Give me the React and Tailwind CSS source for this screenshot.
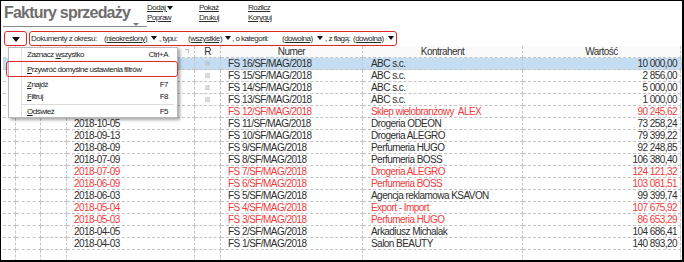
import React from "react";

const Tri = ({ w = 7, h = 4, color = "#111" }) => (
  <svg width={w} height={h} viewBox={`0 0 ${w} ${h}`} className="inline-block">
    <path d={`M0 0H${w}L${w / 2} ${h}Z`} fill={color} />
  </svg>
);

const rows = [
  { d: "", n: "FS 16/SF/MAG/2018", k: "ABC s.c.", v: "10 000,00", sel: true, icon: true },
  { d: "", n: "FS 15/SF/MAG/2018", k: "ABC s.c.", v: "2 856,00", icon: true },
  { d: "", n: "FS 14/SF/MAG/2018", k: "ABC s.c.", v: "5 000,00", icon: true },
  { d: "", n: "FS 13/SF/MAG/2018", k: "ABC s.c.", v: "1 000,00", icon: true },
  { d: "", n: "FS 12/SF/MAG/2018", k: "Sklep wielobranżowy  ALEX", v: "90 245,62", red: true },
  { d: "2018-10-05", n: "FS 11/SF/MAG/2018", k: "Drogeria ODEON", v: "73 258,24" },
  { d: "2018-09-13", n: "FS 10/SF/MAG/2018", k: "Drogeria ALEGRO", v: "79 399,22" },
  { d: "2018-08-09", n: "FS 9/SF/MAG/2018", k: "Perfumeria HUGO", v: "92 248,85" },
  { d: "2018-07-09", n: "FS 8/SF/MAG/2018", k: "Perfumeria BOSS", v: "106 380,40" },
  { d: "2018-07-09", n: "FS 7/SF/MAG/2018", k: "Drogeria ALEGRO", v: "124 121,32", red: true },
  { d: "2018-06-09", n: "FS 6/SF/MAG/2018", k: "Perfumeria BOSS", v: "103 081,51", red: true },
  { d: "2018-06-03", n: "FS 5/SF/MAG/2018", k: "Agencja reklamowa KSAVON", v: "99 399,74" },
  { d: "2018-05-04", n: "FS 4/SF/MAG/2018", k: "Export - Import", v: "107 675,92", red: true },
  { d: "2018-05-03", n: "FS 3/SF/MAG/2018", k: "Perfumeria HUGO", v: "86 653,29", red: true },
  { d: "2018-04-05", n: "FS 2/SF/MAG/2018", k: "Arkadiusz Michalak", v: "104 686,41" },
  { d: "2018-04-03", n: "FS 1/SF/MAG/2018", k: "Salon BEAUTY", v: "140 893,20" },
  { d: "", n: "", k: "", v: "" },
];

const cell = "border-r border-b border-dashed border-[#c4c4c4] h-[12px] leading-[11px] overflow-hidden whitespace-nowrap";
const grid = "grid grid-cols-[13px_25px_26px_128px_26px_142px_160px_158px]";

function RIcon() {
  return (
    <svg width="5" height="5" viewBox="0 0 5 5" className="block">
      <rect x="0" y="0.5" width="5" height="1" fill="#b8b8b8" />
      <rect x="0" y="2.5" width="5" height="1" fill="#b8b8b8" />
      <rect x="0" y="4" width="5" height="1" fill="#d0d0d0" />
    </svg>
  );
}

function MenuItem({ children, sc, h }) {
  return (
    <div className={`flex items-center justify-between pl-[18px] pr-[9px] ${h}`}>
      <span>{children}</span>
      <span>{sc}</span>
    </div>
  );
}

export default function App() {
  return (
    <div
      className="relative w-[684px] h-[262px] overflow-hidden bg-white border-l border-t border-black border-r-2 border-b-2 text-[#2b2b2b]"
      style={{ fontFamily: '"Liberation Sans", Arial, sans-serif' }}
    >
      {/* top bar */}
      <div className="flex h-[30px]">
        <div className="ml-[2px] w-[144px] h-[26px] border-b border-[#8a8a8a] flex items-start pt-[2px] pl-[1px]">
          <span className="text-[16px] leading-[20px] font-bold tracking-[-0.8px] text-[#6e6e6e]">Faktury sprzedaży</span>
          <span className="ml-[3px] mt-[9px]"><Tri w={6} h={3} color="#777" /></span>
        </div>
        <div className="w-[52px] pt-[2px] text-[8px] tracking-[-0.5px] leading-[10px]">
          <div className="underline">Dodaj <Tri w={6} h={4} /></div>
          <div className="underline">Popraw</div>
        </div>
        <div className="w-[49px] pt-[2px] text-[8px] tracking-[-0.5px] leading-[10px]">
          <div className="underline">Pokaż</div>
          <div className="underline">Drukuj</div>
        </div>
        <div className="pt-[2px] text-[8px] tracking-[-0.5px] leading-[10px]">
          <div className="underline">Rozlicz</div>
          <div className="underline">Koryguj</div>
        </div>
      </div>

      {/* filter row */}
      <div className="flex items-center ml-[3px] mt-[0px] h-[15px] gap-[2px] text-[8px] tracking-[-0.5px]">
        <div className="w-[23px] h-[15px] border-[1.5px] border-[#e02a2a] rounded-[3px] flex items-center justify-center pt-[1px]">
          <Tri w={8} h={5} />
        </div>
        <div className="w-[368px] h-[15px] border-[1.5px] border-[#e02a2a] rounded-[3px] flex items-center pl-[1px] whitespace-nowrap">
          <span className="w-[73px]">Dokumenty z okresu:</span>
          <span className="w-[46px] underline">(nieokreślony)</span>
          <span className="w-[9px] pl-[1px]"><Tri w={6} h={4} /></span>
          <span className="w-[29px]">, typu:</span>
          <span className="w-[37px] underline">(wszystkie)</span>
          <span className="w-[7px]"><Tri w={6} h={4} /></span>
          <span className="w-[50px]">, o kategorii:</span>
          <span className="w-[35px] underline">(dowolna)</span>
          <span className="w-[8px]"><Tri w={6} h={4} /></span>
          <span className="w-[28px]">, z flagą:</span>
          <span className="w-[35px] underline">(dowolna)</span>
          <span className="w-[7px]"><Tri w={6} h={4} /></span>
        </div>
      </div>

      {/* table */}
      <div className="ml-[2px] text-[10px] tracking-[-0.55px]">
        <div className={`${grid} bg-[#fafafa]`}>
          <div className={cell}></div>
          <div className={cell}></div>
          <div className={cell}></div>
          <div className={`${cell} flex justify-end items-start pr-[5px] pt-[3px]`}>
            <svg width="4" height="4" viewBox="0 0 4 4"><path d="M0 0.5H4M3.5 0.5V4" stroke="#c0c0c0" strokeWidth="1" /></svg>
          </div>
          <div className={`${cell} text-center text-[#333]`}>R</div>
          <div className={`${cell} text-center text-[#333]`}>Numer</div>
          <div className={`${cell} text-center text-[#333]`}>Kontrahent</div>
          <div className={`${cell} text-center text-[#333]`}>Wartość</div>
        </div>
        {rows.map((r, i) => (
          <div
            key={i}
            className={`${grid} ${r.sel ? "bg-[#c5ddf3]" : ""} ${r.red ? "text-[#f23b3b]" : "text-[#2e2e2e]"}`}
          >
            <div className={cell}></div>
            <div className={cell}></div>
            <div className={cell}></div>
            <div className={`${cell} pl-[7px]`}>{r.d}</div>
            <div className={`${cell} flex items-center justify-center`}>{r.icon ? <RIcon /> : null}</div>
            <div className={`${cell} pl-[7px]`}>{r.n}</div>
            <div className={`${cell} pl-[8px] whitespace-pre`}>{r.k}</div>
            <div className={`${cell} text-right pr-[3px]`}>{r.v}</div>
          </div>
        ))}
      </div>

      {/* dropdown menu */}
      <div className="absolute left-[7px] top-[46px] w-[170px] h-[71px] bg-white border border-[#b9b9b9] shadow-[2px_2px_3px_rgba(0,0,0,0.35)] text-[8px] tracking-[-0.5px] text-[#222]">
        <div className="absolute left-[12px] top-0 bottom-0 w-px bg-[#e2e2e2]"></div>
        <div className="relative">
          <MenuItem sc="Ctrl+A" h="h-[13px]">Zaznacz <span className="underline">w</span>szystko</MenuItem>
          <div className="h-[2px] flex items-start pl-[13px] pr-[3px]"><div className="w-full h-px bg-[#dcdcdc]"></div></div>
          <MenuItem sc="" h="h-[14px]"><span className="underline">P</span>rzywróć domyślne ustawienia filtrów</MenuItem>
          <div className="h-[1px]"></div>
          <MenuItem sc="F7" h="h-[13px]"><span className="underline">Z</span>najdź</MenuItem>
          <MenuItem sc="F8" h="h-[11px]"><span className="underline">F</span>iltruj</MenuItem>
          <div className="h-[4px] flex items-center pl-[13px] pr-[3px]"><div className="w-full h-px bg-[#dcdcdc]"></div></div>
          <MenuItem sc="F5" h="h-[12px]"><span className="underline">O</span>dśwież</MenuItem>
        </div>
      </div>
      <div className="absolute left-[5px] top-[60px] w-[172px] h-[16px] border-[1.5px] border-[#e02a2a] rounded-[3px]"></div>
    </div>
  );
}
